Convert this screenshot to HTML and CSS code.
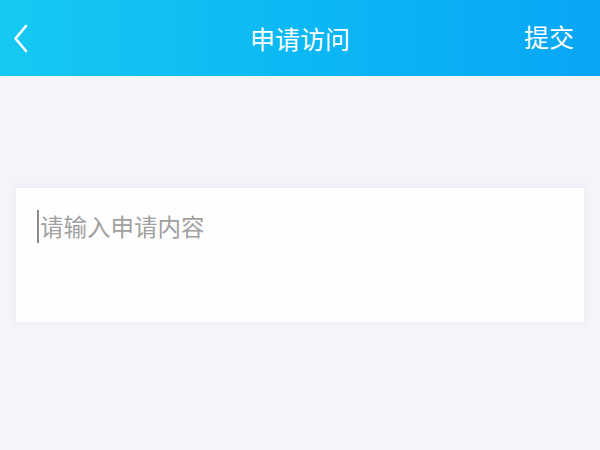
FILE: index.html
```html
<!DOCTYPE html>
<html lang="zh">
<head>
<meta charset="utf-8">
<link rel="stylesheet" href="styles.css">
</head>
<body>
<header class="bar">
  <div class="back">
    <svg width="18" height="30" viewBox="0 0 18 30"><path d="M14 3 L3.5 15.5 L14 28" fill="none" stroke="#fff" stroke-width="2.6" stroke-linecap="round" stroke-linejoin="round"/></svg>
  </div>
  <div class="title">申请访问</div>
  <div class="submit">提交</div>
</header>
<main class="page">
  <div class="card">
    <div class="field"><span class="caret"></span><span class="placeholder">请输入申请内容</span></div>
  </div>
</main>
</body>
</html>
```
FILE: styles.css
```css
html, body { margin: 0; padding: 0; }
body {
  width: 600px; height: 450px; overflow: hidden;
  background: #f4f5f9;
  font-family: "Noto Sans CJK SC", "Noto Sans", sans-serif;
}
.bar {
  height: 76px;
  background: linear-gradient(90deg, #16c9f3 0%, #0cb8f4 50%, #08a6f5 100%);
  display: flex; align-items: center; justify-content: space-between;
  padding: 0 26px 0 12px;
  position: relative;
  color: #fff;
}
.back { display: flex; align-items: center; height: 30px; margin-top: -1px; }
.title {
  position: absolute; left: 0; right: 0; text-align: center;
  font-size: 25px; line-height: 30px; top: 23px; pointer-events: none;
}
.submit { font-size: 25px; line-height: 30px; margin-top: -4px; }
.page { padding-top: 112px; display: flex; justify-content: center; }
.card {
  width: 568px; height: 134px;
  background: #fefeff;
  box-shadow: 0 0 6px rgba(220,222,235,0.6);
}
.field { display: flex; align-items: center; padding: 22px 0 0 21px; }
.caret { width: 2px; height: 33px; background: #8a8a8a; margin-right: 1px; }
.placeholder { font-size: 23.5px; color: #a0a0a0; line-height: 33px; }
```
